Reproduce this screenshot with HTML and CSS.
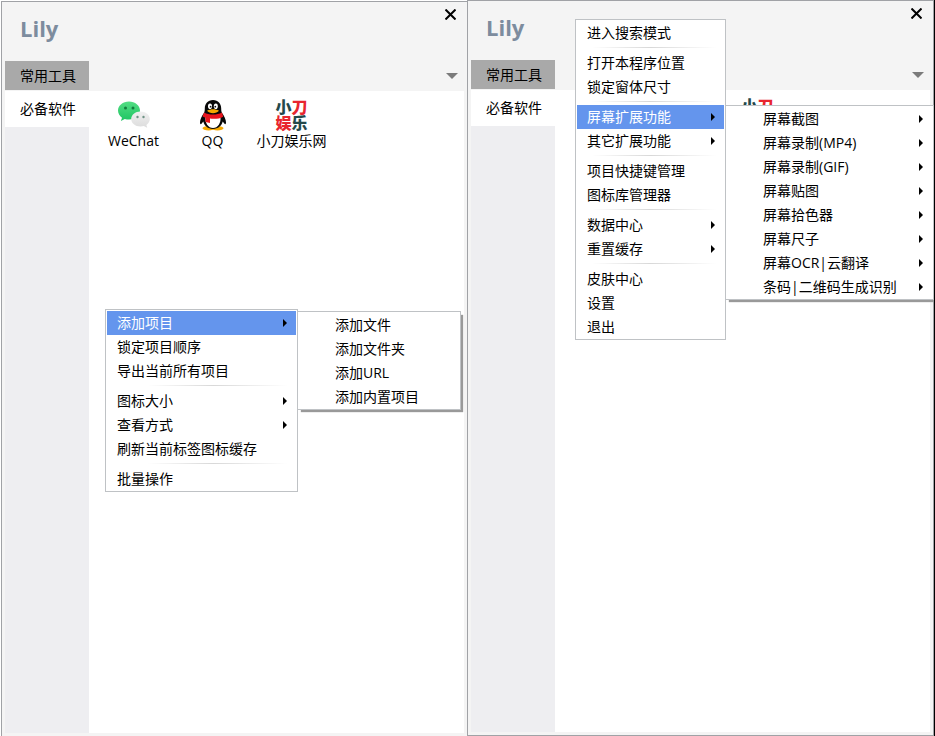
FILE: index.html
```html
<!DOCTYPE html>
<html lang="zh-CN">
  <head>
    <meta charset="UTF-8" />
    <meta name="viewport" content="width=device-width, initial-scale=1.0" />
    <title>Lily</title>
    <link rel="stylesheet" href="styles.css">
  </head>
  <body>
    <!-- shared icons -->
    <svg class="sprite" aria-hidden="true">
      <defs>
        <linearGradient id="green" x1="0" y1="0" x2="0" y2="1">
          <stop offset="0" stop-color="#52dd83" />
          <stop offset="1" stop-color="#1fc563" />
        </linearGradient>
        <linearGradient id="silver" x1="0" y1="0" x2="0" y2="1">
          <stop offset="0" stop-color="#f1f1f1" />
          <stop offset="1" stop-color="#dcdcdc" />
        </linearGradient>
      </defs>
      <symbol id="wechat" viewBox="0 0 32 32">
        <path d="M11 2.500C4.800 2.500 0 6.500 0 11.600c0 2.900 1.600 5.400 4 7.100l-1.100 3.200 3.900-2c1.400.5 2.800.7 4.200.7 6.100 0 11-4 11-9S17.100 2.500 11 2.500z" fill="url(#green)" />
        <circle cx="7.500" cy="9" r="1.500" fill="#117d3d" />
        <circle cx="15" cy="9" r="1.500" fill="#117d3d" />
        <path d="M22.500 12.500c-5.200 0-9.300 3.400-9.300 7.600s4.100 7.500 9.300 7.500c1.200 0 2.300-.2 3.300-.5l3.400 1.600-.8-2.700c2.100-1.400 3.400-3.500 3.400-5.900 0-4.200-4.100-7.600-9.300-7.600z" fill="url(#silver)" />
        <circle cx="19.500" cy="18" r="1.200" fill="#6f9285" />
        <circle cx="25.500" cy="18" r="1.200" fill="#6f9285" />
      </symbol>
      <symbol id="qq" viewBox="0 0 32 32">
        <ellipse cx="11.500" cy="29.300" rx="6" ry="2.200" fill="#f5a800" />
        <ellipse cx="20.500" cy="29.300" rx="6" ry="2.200" fill="#f5a800" />
        <path d="M16 1C10.800 1 7.800 4.700 7.800 9.500c0 2-.2 3-.8 4.600-2.200 3-4 6.700-4 9.200 0 2 .7 2.300 1.500 1.500l1.800-2.200C7.200 27 11 30 16 30s8.800-3 9.700-7.400l1.800 2.200c.8.800 1.500.5 1.500-1.500 0-2.500-1.800-6.200-4-9.200-.6-1.600-.8-2.600-.8-4.600C24.200 4.700 21.200 1 16 1z" fill="#080808" />
        <path d="M8.500 18c-.6 6 2.500 11 7.500 11s8.100-5 7.500-11z" fill="#fff" />
        <path d="M7 13.500c5 2.800 13 2.800 18 0l1.200 4.200c-3.400 2.100-9 2.500-13.200 1.900V24l-4.500-1v-4.200l-3-1.300z" fill="#e8141c" />
        <ellipse cx="13" cy="7.300" rx="2" ry="2.800" fill="#fff" />
        <ellipse cx="18.800" cy="7.300" rx="2" ry="2.800" fill="#fff" />
        <circle cx="13.600" cy="7.700" r=".9" fill="#111" />
        <circle cx="18.300" cy="7.700" r=".9" fill="#111" />
        <path d="M10 11.800c3.500-2 8.500-2 12 0-2.500 3.300-9.500 3.300-12 0z" fill="#f5a800" />
      </symbol>
      <symbol id="close" viewBox="0 0 11 11">
        <path d="M0.500 0.500l10 10M10.500 0.500l-10 10" stroke="#000" stroke-width="2" />
      </symbol>
    </svg>

    <main class="window window-left">
      <header class="header">
        <div class="title-bar">
          <h1>Lily</h1>
          <button class="close" aria-label="关闭"><svg><use href="#close" /></svg></button>
        </div>
        <div class="tabs">
          <button class="tab">常用工具</button>
          <button class="more" aria-label="更多"></button>
        </div>
      </header>
      <div class="main">
        <nav class="sidebar">
          <button class="group">必备软件</button>
        </nav>
        <div class="apps">
          <a class="app" href="#"><svg class="icon"><use href="#wechat" /></svg>WeChat</a>
          <a class="app" href="#"><svg class="icon"><use href="#qq" /></svg>QQ</a>
          <a class="app" href="#">
            <span class="icon logo"><b>小</b><b class="red">刀</b><b class="red">娱</b><b>乐</b></span>
            小刀娱乐网
          </a>
        </div>
      </div>

      <div class="menu menu-item">
        <div class="entry">
          <button class="item active arrow">添加项目</button>
          <div class="menu submenu submenu-add">
            <button class="item">添加文件</button>
            <button class="item">添加文件夹</button>
            <button class="item">添加URL</button>
            <button class="item">添加内置项目</button>
          </div>
        </div>
        <button class="item">锁定项目顺序</button>
        <button class="item">导出当前所有项目</button>
        <hr>
        <button class="item arrow">图标大小</button>
        <button class="item arrow">查看方式</button>
        <button class="item">刷新当前标签图标缓存</button>
        <hr>
        <button class="item">批量操作</button>
      </div>
    </main>

    <section class="window window-right">
      <header class="header">
        <div class="title-bar">
          <h1>Lily</h1>
          <button class="close" aria-label="关闭"><svg><use href="#close" /></svg></button>
        </div>
        <div class="tabs">
          <button class="tab">常用工具</button>
          <button class="more" aria-label="更多"></button>
        </div>
      </header>
      <div class="main">
        <nav class="sidebar">
          <button class="group">必备软件</button>
        </nav>
        <div class="apps">
          <a class="app" href="#"><svg class="icon"><use href="#wechat" /></svg></a>
          <a class="app" href="#"><svg class="icon"><use href="#qq" /></svg></a>
          <a class="app" href="#">
            <span class="icon logo"><b>小</b><b class="red">刀</b></span>
          </a>
        </div>
      </div>

      <div class="menu menu-main">
        <button class="item">进入搜索模式</button>
        <hr>
        <button class="item">打开本程序位置</button>
        <button class="item">锁定窗体尺寸</button>
        <hr>
        <div class="entry">
          <button class="item active arrow">屏幕扩展功能</button>
          <div class="menu submenu submenu-screen">
            <button class="item arrow">屏幕截图</button>
            <button class="item arrow">屏幕录制(MP4)</button>
            <button class="item arrow">屏幕录制(GIF)</button>
            <button class="item arrow">屏幕贴图</button>
            <button class="item arrow">屏幕拾色器</button>
            <button class="item arrow">屏幕尺子</button>
            <button class="item arrow">屏幕OCR|云翻译</button>
            <button class="item arrow">条码|二维码生成识别</button>
          </div>
        </div>
        <button class="item arrow">其它扩展功能</button>
        <hr>
        <button class="item">项目快捷键管理</button>
        <button class="item">图标库管理器</button>
        <hr>
        <button class="item arrow">数据中心</button>
        <button class="item arrow">重置缓存</button>
        <hr>
        <button class="item">皮肤中心</button>
        <button class="item">设置</button>
        <button class="item">退出</button>
      </div>
    </section>
  </body>
</html>
```
FILE: styles.css
```css
body {
  display: flex;
  box-sizing: border-box;
  min-height: 100vh;
  margin: 0;
  padding-left: 1px;
  border-right: 1px solid #000;
  background: #fff;
  color: #000;
  font-family: "Open Sans", "Noto Sans CJK SC", sans-serif;
  font-size: 14px;
}
button {
  margin: 0;
  padding: 0;
  border: none;
  background: none;
  color: inherit;
  font: inherit;
  text-align: left;
  cursor: pointer;
}
.sprite {
  position: absolute;
  width: 0;
  height: 0;
}
.window {
  position: relative;
  display: flex;
  flex: 1 1 0;
  flex-direction: column;
  padding: 0 3px 3px;
  border: 1px solid #a0a2a6;
  background: #f4f4f4;
}
.window-left {
  margin-top: 1px;
  border-right: none;
  border-bottom: none;
}

/* header */
.title-bar {
  display: flex;
  justify-content: space-between;
  align-items: flex-start;
  height: 59px;
}
h1 {
  margin: 10px 0 0 15px;
  color: #7d8c9e;
  font-size: 22px;
  line-height: 32px;
}
.close {
  padding: 7px 8px;
}
.close svg {
  display: block;
  width: 11px;
  height: 11px;
}
.tabs {
  display: flex;
  justify-content: space-between;
  align-items: center;
  padding-bottom: 1px;
}
.tab,
.group {
  padding: 0 0 2px 15px;
}
.tab {
  width: 84px;
  height: 29px;
  background: #a9a9a9;
}
.more {
  margin-right: 6px;
  border: 6px solid transparent;
  border-top-color: #7b7b7b;
  border-bottom: none;
}

/* groups and apps */
.main {
  display: flex;
  flex: 1;
}
.sidebar {
  width: 84px;
  background: #eeeef1;
}
.group {
  width: 100%;
  height: 36px;
  background: #fff;
}
.apps {
  display: grid;
  flex: 1;
  grid-template-columns: repeat(auto-fill, 79px);
  align-content: start;
  padding: 8px 5px;
  background: #fff;
}
.app {
  display: flex;
  flex-direction: column;
  align-items: center;
  color: inherit;
  line-height: 20px;
  text-decoration: none;
  white-space: nowrap;
}
.icon {
  width: 32px;
  height: 32px;
}
.logo {
  display: grid;
  grid-template-columns: 16px 16px;
  color: #24494b;
  font-size: 16px;
  line-height: 16px;
}
.logo b {
  font-weight: 900;
}
.logo .red {
  color: #e8262f;
}

/* menus */
.menu {
  position: absolute;
  z-index: 1;
  display: flex;
  box-sizing: border-box;
  flex-direction: column;
  padding: 1px 1px 0;
  border: 1px solid #bfc2c5;
  background: #fff;
}
.menu-item {
  top: 307px;
  left: 103px;
  width: 193px;
}
.menu-main {
  top: 18px;
  left: 107px;
  width: 151px;
}
.entry {
  position: relative;
}
.item {
  display: flex;
  justify-content: space-between;
  align-items: center;
  width: 100%;
  height: 24px;
  padding: 0 9px 0 10px;
  line-height: 24px;
  white-space: nowrap;
}
.item.active {
  background: #6495ed;
  color: #fff;
}
.arrow::after {
  content: "";
  border: 4px solid transparent;
  border-left: 4px solid #000;
  border-right: none;
}
.menu hr {
  width: 165px;
  max-width: 100%;
  height: 1px;
  margin: 2px 0 3px auto;
  border: none;
  background: linear-gradient(to right, #fff 10%, #d8d8d8 50%, #fff 95%);
}
.submenu {
  top: 0;
  left: calc(100% + 1px);
  box-shadow: 3px 3px 1px -1px #999;
}
.submenu .item {
  padding-left: 36px;
}
.submenu-add {
  width: 164px;
}
.submenu-screen {
  width: 209px;
}
```
